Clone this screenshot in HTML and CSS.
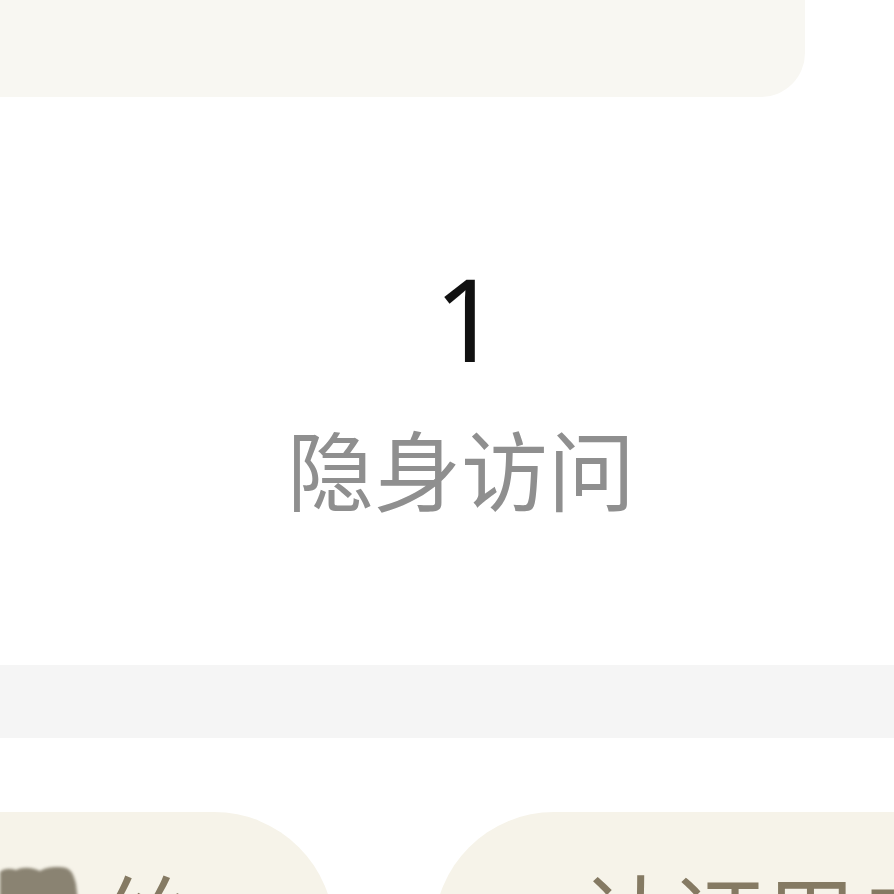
FILE: index.html
```html
<!DOCTYPE html>
<html lang="zh">
<head>
<meta charset="utf-8">
<link rel="stylesheet" href="styles.css">
</head>
<body>
<div class="page">
  <div class="top-card"></div>
  <section class="stat">
    <div class="stat-num">1</div>
    <div class="stat-label">隐身访问</div>
  </section>
  <div class="band"></div>
  <div class="cards">
    <div class="card card-left">
      <svg class="blob" width="80" height="40" viewBox="0 0 80 40">
        <path d="M0 10 C4 6 10 6 16 8 C24 4 34 6 40 9 C46 5 58 4 66 6 C72 8 74 14 76 22 L78 40 L0 40 Z" fill="#8a8372"/>
      </svg>
      <span class="card-text">丝</span>
    </div>
    <div class="card card-right">
      <span class="card-text">认证用户</span>
    </div>
  </div>
</div>
</body>
</html>
```
FILE: styles.css
```css
html, body {
  margin: 0;
  padding: 0;
  background: #ffffff;
}
body {
  font-family: "Noto Sans", "Noto Sans CJK SC", sans-serif;
  overflow: hidden;
}
.page {
  width: 894px;
  height: 894px;
  overflow: hidden;
}
.top-card {
  width: 805px;
  height: 97px;
  background: #f8f7f2;
  border-radius: 0 0 44px 0;
}
.stat {
  height: 568px;
  box-sizing: border-box;
  padding-top: 163px;
  padding-left: 28px;
  display: flex;
  flex-direction: column;
  align-items: center;
}
.stat-num {
  font-family: "Noto Sans", sans-serif;
  font-size: 115px;
  line-height: 115px;
  color: #111111;
  margin-left: 12px;
}
.stat-label {
  font-family: "Noto Sans CJK SC", sans-serif;
  font-size: 87px;
  line-height: 87px;
  color: #8f8f8f;
  margin-top: 49px;
}
.band {
  height: 73px;
  background: #f5f5f5;
}
.cards {
  margin-top: 74px;
  display: flex;
  gap: 100px;
  height: 82px;
}
.card {
  background: #f6f3e9;
  height: 160px;
  box-sizing: border-box;
  padding-top: 55px;
  display: flex;
  align-items: flex-start;
  white-space: nowrap;
}
.card-left {
  width: 334px;
  flex: none;
  border-radius: 0 120px 0 0;
  padding-left: 0;
}
.card-right {
  flex: 1;
  border-radius: 120px 0 0 0;
  padding-left: 146px;
}
.blob {
  margin-top: -5px;
  filter: blur(1.5px);
  flex: none;
}
.card-text {
  font-family: "Noto Sans CJK SC", sans-serif;
  font-size: 92px;
  line-height: 92px;
  color: #857a63;
}
.card-left .card-text {
  margin-left: 18px;
}
```
